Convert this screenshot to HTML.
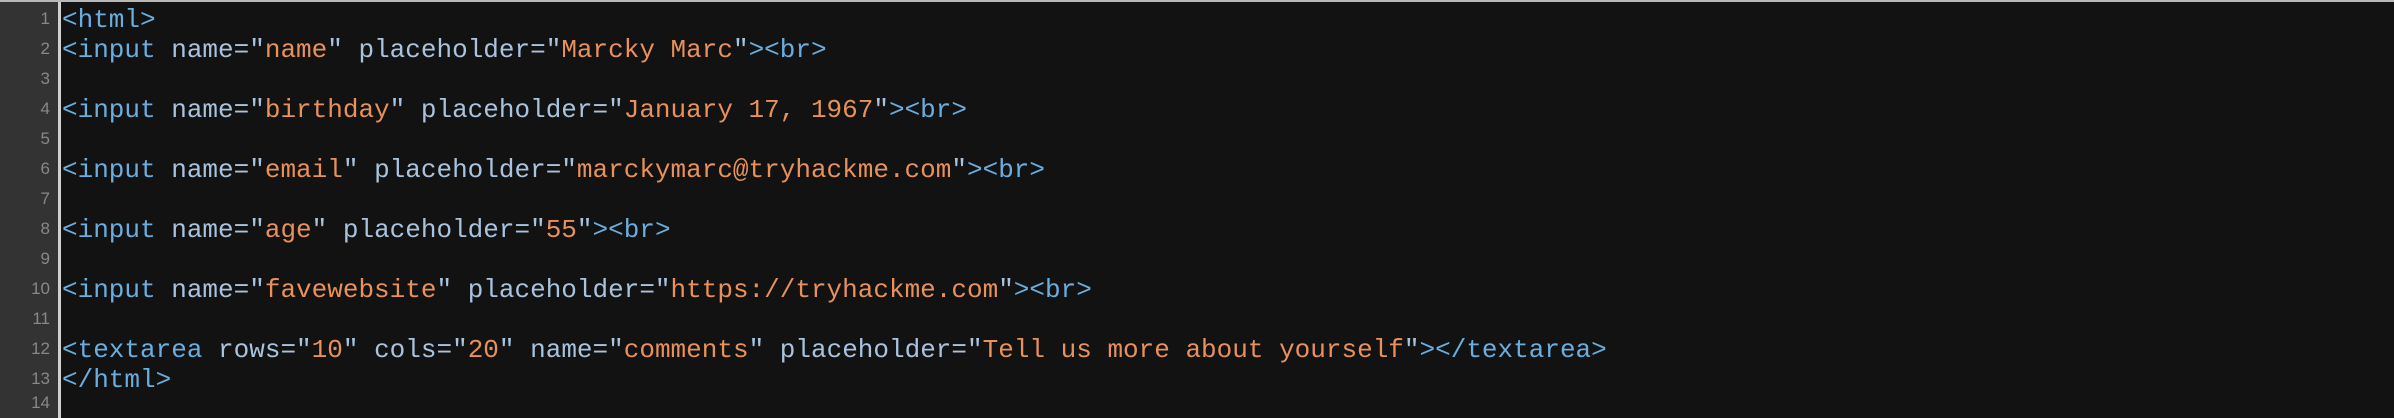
<!DOCTYPE html>
<html><head><style>
html,body{margin:0;padding:0;width:2394px;height:418px;overflow:hidden;background:#121212;}
.top{position:absolute;left:0;top:0;width:2394px;height:2px;background:#b8b8b8;}
.gut{position:absolute;left:0;top:2px;width:58px;height:416px;background:#333;}
.bd{position:absolute;left:58px;top:2px;width:3px;height:416px;background:#d0d0d0;}
.ln{position:absolute;left:0;width:50px;text-align:right;font-family:"Liberation Sans",sans-serif;font-size:17px;color:#888;}
.code{position:absolute;left:62px;font-family:"Liberation Mono",monospace;font-size:26px;color:#a9c3df;white-space:pre;line-height:30px;}
.t{color:#6aaee0}.s{color:#e8915a}
</style></head><body>
<div class="top"></div><div class="gut"></div><div class="bd"></div>
<div class="ln" style="top:9px">1</div>
<div class="ln" style="top:39px">2</div>
<div class="ln" style="top:69px">3</div>
<div class="ln" style="top:99px">4</div>
<div class="ln" style="top:129px">5</div>
<div class="ln" style="top:159px">6</div>
<div class="ln" style="top:189px">7</div>
<div class="ln" style="top:219px">8</div>
<div class="ln" style="top:249px">9</div>
<div class="ln" style="top:279px">10</div>
<div class="ln" style="top:309px">11</div>
<div class="ln" style="top:339px">12</div>
<div class="ln" style="top:369px">13</div>
<div class="ln" style="top:393px">14</div>
<div class="code" style="top:5px"><span class="t">&lt;html&gt;</span>
<span class="t">&lt;input</span> name="<span class="s">name</span>" placeholder="<span class="s">Marcky Marc</span>"<span class="t">&gt;&lt;br&gt;</span>

<span class="t">&lt;input</span> name="<span class="s">birthday</span>" placeholder="<span class="s">January 17, 1967</span>"<span class="t">&gt;&lt;br&gt;</span>

<span class="t">&lt;input</span> name="<span class="s">email</span>" placeholder="<span class="s">marckymarc@tryhackme.com</span>"<span class="t">&gt;&lt;br&gt;</span>

<span class="t">&lt;input</span> name="<span class="s">age</span>" placeholder="<span class="s">55</span>"<span class="t">&gt;&lt;br&gt;</span>

<span class="t">&lt;input</span> name="<span class="s">favewebsite</span>" placeholder="<span class="s">https://tryhackme.com</span>"<span class="t">&gt;&lt;br&gt;</span>

<span class="t">&lt;textarea</span> rows="<span class="s">10</span>" cols="<span class="s">20</span>" name="<span class="s">comments</span>" placeholder="<span class="s">Tell us more about yourself</span>"<span class="t">&gt;&lt;/textarea&gt;</span>
<span class="t">&lt;/html&gt;</span></div>
</body></html>
